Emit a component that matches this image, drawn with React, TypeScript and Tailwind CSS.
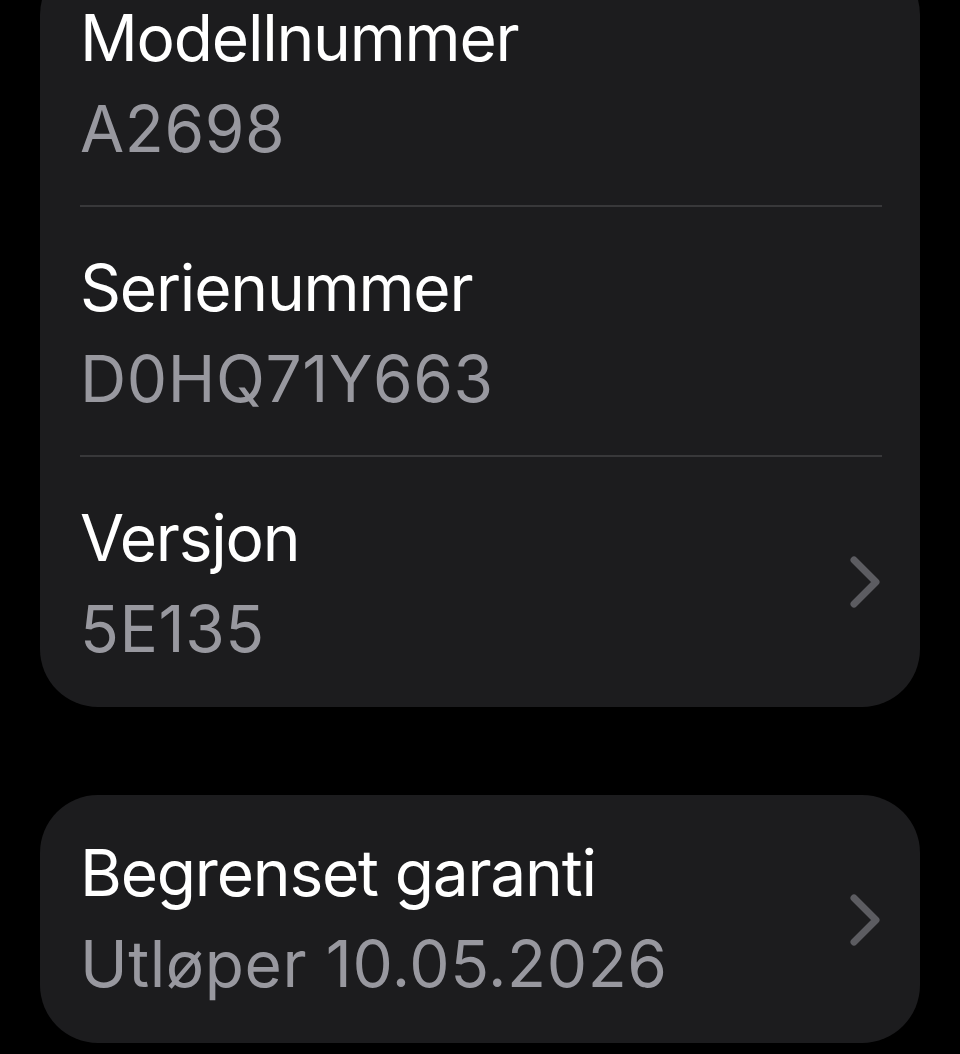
import React from 'react';

interface Row {
  label: string;
  value: string;
  chevron?: boolean;
}

const rows: Row[] = [
  { label: 'Modellnummer', value: 'A2698' },
  { label: 'Serienummer', value: 'D0HQ71Y663' },
  { label: 'Versjon', value: '5E135', chevron: true },
];

const Chevron: React.FC = () => (
  <svg width="30" height="52" viewBox="0 0 30 52" className="mr-[2px] shrink-0">
    <polyline
      points="4,4 26,26 4,48"
      fill="none"
      stroke="#5c5c61"
      strokeWidth="7"
      strokeLinecap="round"
      strokeLinejoin="round"
    />
  </svg>
);

const InfoRow: React.FC<{ row: Row; last: boolean; top: string }> = ({ row, last, top }) => (
  <div className="pl-[40px] pr-[38px]">
    <div className={`flex h-[250px] items-center justify-between ${last ? '' : 'border-b-2 border-[#38383a]'}`}>
      <div className={`self-start ${top}`}>
        <div className="text-[64px] leading-[91px] text-white tracking-[-1.2px]">{row.label}</div>
        <div className="text-[64px] leading-[91px] text-[#98989f] tracking-[0.6px]">{row.value}</div>
      </div>
      {row.chevron && <Chevron />}
    </div>
  </div>
);

export default function App() {
  return (
    <div className="h-[1054px] w-[960px] overflow-hidden bg-black px-[40px] font-['Inter','Noto_Sans',sans-serif]">
      <div className="-mt-[43px] rounded-[58px] bg-[#1c1c1e]">
        {rows.map((r, i) => (
          <InfoRow key={r.label} row={r} last={i === rows.length - 1} top="pt-[35px]" />
        ))}
      </div>
      <div className="mt-[88px] h-[248px] rounded-[58px] bg-[#1c1c1e]">
        <InfoRow
          row={{ label: 'Begrenset garanti', value: 'Utløper 10.05.2026', chevron: true }}
          last
          top="pt-[32px]"
        />
      </div>
    </div>
  );
}
